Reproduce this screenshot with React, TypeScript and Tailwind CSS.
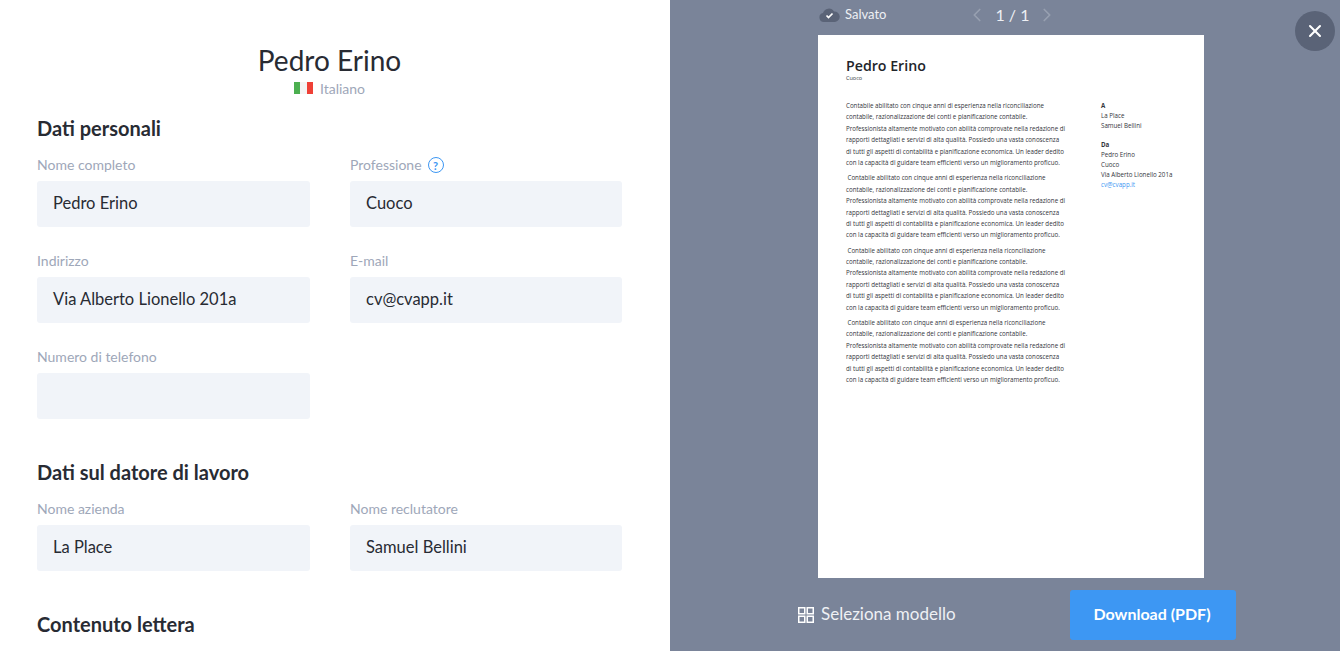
import { ChevronLeft, ChevronRight, X } from "lucide-react";

const letterLines = [
  "Contabile abilitato con cinque anni di esperienza nella riconciliazione",
  "contabile, razionalizzazione dei conti e pianificazione contabile.",
  "Professionista altamente motivato con abilità comprovate nella redazione di",
  "rapporti dettagliati e servizi di alta qualità. Possiedo una vasta conoscenza",
  "di tutti gli aspetti di contabilità e pianificazione economica. Un leader dedito",
  "con la capacità di guidare team efficienti verso un miglioramento proficuo.",
];

const Field = ({ label, value, help }: { label: string; value?: string; help?: boolean }) => (
  <div>
    <div className="flex items-center gap-[6px] h-[22px] text-[14px] text-[#9ea7b9] leading-[22px]">
      {label}
      {help && (
        <span className="w-4 h-4 rounded-full border border-[#3d97f3] text-[#3d97f3] text-[11px] font-bold flex items-center justify-center leading-none">
          ?
        </span>
      )}
    </div>
    <div className="mt-[5px] h-[46px] bg-[#f1f4f9] rounded-[3px] px-4 pb-px flex items-center text-[16.5px] text-[#282b33]">
      {value}
    </div>
  </div>
);

const Paragraph = ({ indent }: { indent?: boolean }) => (
  <div className="mb-[4px]">
    {letterLines.map((line, i) => (
      <p key={i} className={`h-[11.4px] leading-[11.4px] whitespace-nowrap ${indent && i === 0 ? "pl-[1.5px]" : ""}`}>
        {line}
      </p>
    ))}
  </div>
);

const Preview = () => (
  <div className="flex-1 bg-white pl-[28px] pt-[21px] font-['Open_Sans',sans-serif] text-[#33353b]">
    <h2 className="text-[14.2px] font-semibold leading-[20px] text-[#22252b]">Pedro Erino</h2>
    <p className="text-[5.5px] leading-[7px] mt-[-1px]">Cuoco</p>
    <div className="flex mt-[18px]">
      <div className="w-[255px] text-[6.2px]">
        <Paragraph />
        <Paragraph indent />
        <Paragraph indent />
        <Paragraph indent />
      </div>
      <div className="text-[6.2px] leading-[10px] mt-px">
        <p className="font-bold">A</p>
        <p>La Place</p>
        <p>Samuel Bellini</p>
        <p className="font-bold mt-[9px]">Da</p>
        <p>Pedro Erino</p>
        <p>Cuoco</p>
        <p>Via Alberto Lionello 201a</p>
        <p className="text-[#3d97f3]">cv@cvapp.it</p>
      </div>
    </div>
  </div>
);

export default function App() {
  return (
    <div className="flex h-screen overflow-hidden relative font-['Lato',sans-serif]">
      <main className="w-[670px] shrink-0 bg-white pl-[37px] pr-[48px] pt-[40px]">
        <header className="text-center">
          <h1 className="text-[28px] leading-[40px] text-[#282b33]">Pedro Erino</h1>
          <div className="flex items-center justify-center gap-[7px] h-[16px] text-[14px] text-[#9ea7b9]">
            <span className="flex w-[19px] h-3">
              <span className="flex-1 bg-[#4caf50]" />
              <span className="flex-1 bg-[#f4f4f4]" />
              <span className="flex-1 bg-[#ef4036]" />
            </span>
            Italiano
          </div>
        </header>

        <h3 className="mt-[20px] text-[20px] leading-[24px] font-bold text-[#282b33]">Dati personali</h3>
        <div className="mt-[14px] grid grid-cols-[273px_272px] gap-x-[40px] gap-y-[23px]">
          <Field label="Nome completo" value="Pedro Erino" />
          <Field label="Professione" value="Cuoco" help />
          <Field label="Indirizzo" value="Via Alberto Lionello 201a" />
          <Field label="E-mail" value="cv@cvapp.it" />
          <Field label="Numero di telefono" />
        </div>

        <h3 className="mt-[41px] text-[20px] leading-[24px] font-bold text-[#282b33]">Dati sul datore di lavoro</h3>
        <div className="mt-[14px] grid grid-cols-[273px_272px] gap-x-[40px]">
          <Field label="Nome azienda" value="La Place" />
          <Field label="Nome reclutatore" value="Samuel Bellini" />
        </div>

        <h3 className="mt-[41px] text-[20px] leading-[24px] font-bold text-[#282b33]">Contenuto lettera</h3>
      </main>

      <aside className="flex-1 bg-[#7a8499] flex flex-col pl-[148px]">
        <div className="w-[386px] h-[30px] mb-[5px] flex items-center shrink-0">
          <div className="flex items-center gap-[5px] text-[13px] text-[#eef0f4]">
            <svg width="21" height="14" viewBox="0 0 21 14" className="ml-px">
              <path d="M5 14a4.5 4.5 0 0 1-1-8.9A6 6 0 0 1 15 3.6 5.2 5.2 0 0 1 16 14z" fill="#5a6377" />
              <path d="M7.5 7.5l2 2 4-4" fill="none" stroke="#fff" strokeWidth="1.7" />
            </svg>
            Salvato
          </div>
          <div className="flex items-center ml-[80px] text-[16px] text-[#eef0f4]">
            <ChevronLeft size={22} strokeWidth={1.8} className="text-[#98a0b1]" />
            <span className="mx-[7px]">1 / 1</span>
            <ChevronRight size={22} strokeWidth={1.8} className="text-[#98a0b1]" />
          </div>
        </div>

        <div className="w-[386px] h-[543px] shrink-0 flex">
          <Preview />
        </div>

        <div className="w-[438px] flex items-center justify-between mt-3 ml-[-20px]">
          <button className="flex items-center gap-[7px] text-[17px] leading-[24px] text-[#eef0f4]">
            <svg width="16" height="16" viewBox="0 0 16 16" fill="none" stroke="#fff" strokeWidth="1.5">
              <rect x="0.75" y="0.75" width="6" height="6" />
              <rect x="9.25" y="0.75" width="6" height="6" />
              <rect x="0.75" y="9.25" width="6" height="6" />
              <rect x="9.25" y="9.25" width="6" height="6" />
            </svg>
            <span className="pb-[2px]">Seleziona modello</span>
          </button>
          <button className="w-[166px] h-[50px] pb-[2px] pr-[2px] bg-[#3d97f3] rounded-[3px] text-white text-[16px] font-bold">
            Download (PDF)
          </button>
        </div>
      </aside>

      <button className="absolute top-[11px] right-[5px] w-10 h-10 rounded-full bg-[#5a6377] flex items-center justify-center text-white">
        <X size={20} strokeWidth={2.5} />
      </button>
    </div>
  );
}
